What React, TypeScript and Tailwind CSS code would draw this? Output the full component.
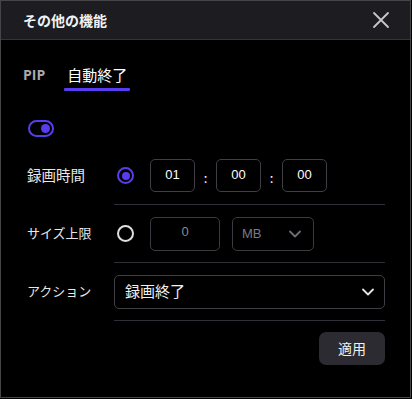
import React from "react";

const font = { fontFamily: '"Noto Sans CJK JP", "Noto Sans", sans-serif' };

function Chevron({ color = "#e5e5e5" }: { color?: string }) {
  return (
    <svg width="16" height="16" viewBox="0 0 16 16" fill="none">
      <path d="M3 5.5 L8 10.5 L13 5.5" stroke={color} strokeWidth="1.8" strokeLinecap="round" strokeLinejoin="round" />
    </svg>
  );
}

function Row({ label, children, size = "text-[13.5px]" }: { label: string; children: React.ReactNode; size?: string }) {
  return (
    <div className="flex">
      <div className={`w-[87px] shrink-0 flex items-center ${size} text-[#e8e8e8] h-[57px] pb-[1px]`}>{label}</div>
      <div className="flex-1 flex flex-col">
        <div className="h-[57px] flex items-center">{children}</div>
        <div className="h-px bg-[#2f2f36]" />
      </div>
    </div>
  );
}

export default function App() {
  return (
    <div className="w-[412px] h-[399px] bg-black" style={font}>
      <div className="w-[411px] h-[398px] border border-[#45454a] bg-black flex flex-col">
        <div className="h-[39px] bg-[#1c1c21] border-b border-[#34343a] flex items-center justify-between pl-[22px] pr-[20px] shrink-0">
          <span className="text-[14px] font-bold text-[#f2f2f2]">その他の機能</span>
          <svg width="18" height="18" viewBox="0 0 18 18" fill="none">
            <path d="M2 2 L16 16 M16 2 L2 16" stroke="#c8c8c8" strokeWidth="1.8" strokeLinecap="round" />
          </svg>
        </div>
        <div className="flex-1 pl-[27px] pr-[25px]">
          <div className="flex items-start gap-[19px] mt-[24px] -ml-[5px]">
            <div className="text-[14px] font-bold text-[#a9a9ad] h-[22px] leading-[22px]" style={{ fontFamily: '"Open Sans", "Noto Sans", sans-serif' }}>PIP</div>
            <div className="flex flex-col items-center">
              <div className="text-[15px] text-white h-[22px] leading-[22px] px-[3px]">自動終了</div>
              <div className="h-[3px] w-[66px] bg-[#5a3cf0] mt-[2px] rounded-[1px]" />
            </div>
          </div>
          <div className="mt-[29px] w-[26px] h-[17px] rounded-full border-2 border-[#5a3cf0] flex items-center justify-end pr-[2px]">
            <div className="w-[9px] h-[9px] rounded-full bg-[#5a3cf0]" />
          </div>
          <div className="mt-[10px] -ml-[1px]">
            <Row label="録画時間" size="text-[14.5px]">
              <div className="flex items-center">
                <div className="w-[17px] h-[17px] rounded-full border-2 border-[#5a3cf0] flex items-center justify-center ml-[3px]">
                  <div className="w-[8px] h-[8px] rounded-full bg-[#5a3cf0]" />
                </div>
                <div className="ml-[16px] w-[45px] h-[33px] rounded-[5px] border border-[#3e3e44] flex items-center justify-center text-[13px] text-white pb-[2px]" style={{ fontFamily: '"Liberation Sans", Arial, sans-serif' }}>01</div>
                <div className="w-[21px] text-center text-[13px] text-white pt-[4px]">:</div>
                <div className="w-[45px] h-[33px] rounded-[5px] border border-[#3e3e44] flex items-center justify-center text-[13px] text-white pb-[2px]" style={{ fontFamily: '"Liberation Sans", Arial, sans-serif' }}>00</div>
                <div className="w-[21px] text-center text-[13px] text-white pt-[4px]">:</div>
                <div className="w-[45px] h-[33px] rounded-[5px] border border-[#3e3e44] flex items-center justify-center text-[13px] text-white pb-[2px]" style={{ fontFamily: '"Liberation Sans", Arial, sans-serif' }}>00</div>
              </div>
            </Row>
            <Row label="サイズ上限" size="text-[13px]">
              <div className="flex items-center">
                <div className="w-[17px] h-[17px] rounded-full border-2 border-[#e0e0e0] ml-[3px]" />
                <div className="ml-[16px] w-[70px] h-[34px] rounded-[5px] border border-[#3a3a40] flex items-center justify-center text-[13px] text-[#8a8a8e] pb-[4px]" style={{ fontFamily: '"Liberation Sans", Arial, sans-serif' }}>0</div>
                <div className="ml-[12px] w-[82px] h-[34px] rounded-[5px] border border-[#3a3a40] flex items-center justify-between pl-[9px] pr-[10px] text-[13px] text-[#7a7a80]" style={{ fontFamily: '"Liberation Sans", Arial, sans-serif' }}>
                  <span>MB</span>
                  <Chevron color="#6e6e74" />
                </div>
              </div>
            </Row>
            <Row label="アクション" size="text-[13px]">
              <div className="w-full h-[34px] rounded-[5px] border border-[#3e3e44] flex items-center justify-between pl-[10px] pr-[8px] text-[15px] text-[#f0f0f0]">
                <span>録画終了</span>
                <Chevron />
              </div>
            </Row>
          </div>
          <div className="flex justify-end mt-[11px]">
            <div className="w-[66px] h-[33px] rounded-[7px] bg-[#2b2b31] flex items-center justify-center text-[14px] text-[#f0f0f0]">適用</div>
          </div>
        </div>
      </div>
    </div>
  );
}
